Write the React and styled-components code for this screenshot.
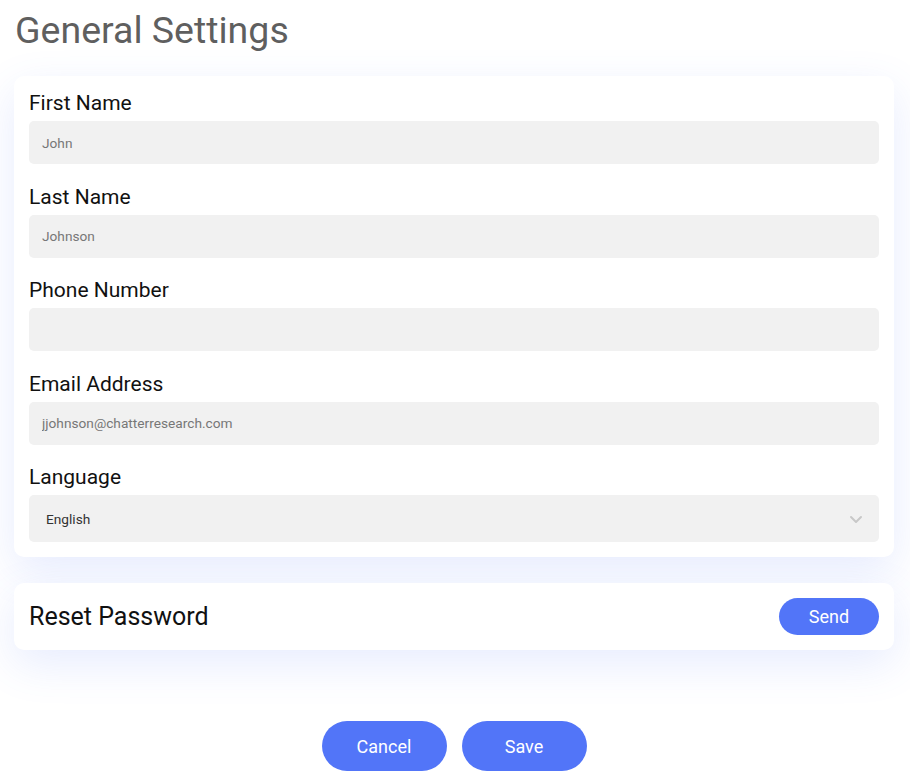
import React from 'react';
import styled, { createGlobalStyle } from 'styled-components';

const GlobalStyle = createGlobalStyle`
  body {
    margin: 0;
    background: #fff;
    font-family: Roboto, "Liberation Sans", sans-serif;
  }
`;

const Page = styled.div`
  width: 910px;
  height: 782px;
  box-sizing: border-box;
  padding: 8px 16px 0 14px;
  display: flex;
  flex-direction: column;
  overflow: hidden;
`;

const Title = styled.h1`
  margin: 0 0 0 1px;
  font-size: 37.5px;
  font-weight: 400;
  line-height: 44px;
  color: #5f5f5f;
`;

const Card = styled.div`
  background: #fff;
  border-radius: 10px;
  box-shadow: 0 14px 44px rgba(82, 117, 248, 0.14);
  padding: 15px;
`;

const FormCard = styled(Card)`
  margin-top: 24px;
  display: flex;
  flex-direction: column;
`;

const Field = styled.div`
  display: flex;
  flex-direction: column;
  gap: 6px;
  margin-bottom: ${(p) => (p.last ? '0' : '20.5px')};
`;

const Label = styled.label`
  font-size: 21px;
  line-height: 24px;
  color: #111;
`;

const Input = styled.input`
  box-sizing: border-box;
  width: 100%;
  height: 43px;
  border: none;
  border-radius: 5px;
  background: #f1f1f1;
  padding: 0 13px;
  font-family: Roboto, "Liberation Sans", sans-serif;
  font-size: 13.7px;
  color: #777;
  outline: none;
  &::placeholder {
    color: #777;
  }
`;

const SelectBox = styled.div`
  height: 47px;
  border-radius: 5px;
  background: #f1f1f1;
  display: flex;
  align-items: center;
  justify-content: space-between;
  padding: 0 16px 0 17px;
  font-size: 13.7px;
  color: #333;
`;

const Chevron = () => (
  <svg width="14" height="14" viewBox="0 0 14 14" fill="none">
    <path d="M2 5l5 5 5-5" stroke="#c8c8c8" strokeWidth="2" strokeLinecap="round" strokeLinejoin="round" />
  </svg>
);

const ResetCard = styled(Card)`
  margin-top: 26px;
  display: flex;
  align-items: center;
  justify-content: space-between;
`;

const ResetTitle = styled.span`
  font-size: 25px;
  color: #111;
`;

const PillButton = styled.button`
  border: none;
  border-radius: 999px;
  background: #5275f8;
  color: #fff;
  font-family: Roboto, "Liberation Sans", sans-serif;
  font-size: 18px;
  cursor: pointer;
  width: ${(p) => (p.small ? '100px' : '125px')};
  height: ${(p) => (p.small ? '37px' : '50px')};
`;

const Actions = styled.div`
  margin-top: 71px;
  display: flex;
  justify-content: center;
  gap: 15px;
`;

const fields = [
  { label: 'First Name', value: 'John' },
  { label: 'Last Name', value: 'Johnson' },
  { label: 'Phone Number', value: '' },
  { label: 'Email Address', value: 'jjohnson@chatterresearch.com' },
];

const App = () => (
  <>
    <GlobalStyle />
    <Page>
      <Title>General Settings</Title>
      <FormCard>
        {fields.map((f) => (
          <Field key={f.label}>
            <Label>{f.label}</Label>
            <Input placeholder={f.value} readOnly />
          </Field>
        ))}
        <Field last>
          <Label>Language</Label>
          <SelectBox>
            <span>English</span>
            <Chevron />
          </SelectBox>
        </Field>
      </FormCard>
      <ResetCard>
        <ResetTitle>Reset Password</ResetTitle>
        <PillButton small>Send</PillButton>
      </ResetCard>
      <Actions>
        <PillButton>Cancel</PillButton>
        <PillButton>Save</PillButton>
      </Actions>
    </Page>
  </>
);

export default App;
